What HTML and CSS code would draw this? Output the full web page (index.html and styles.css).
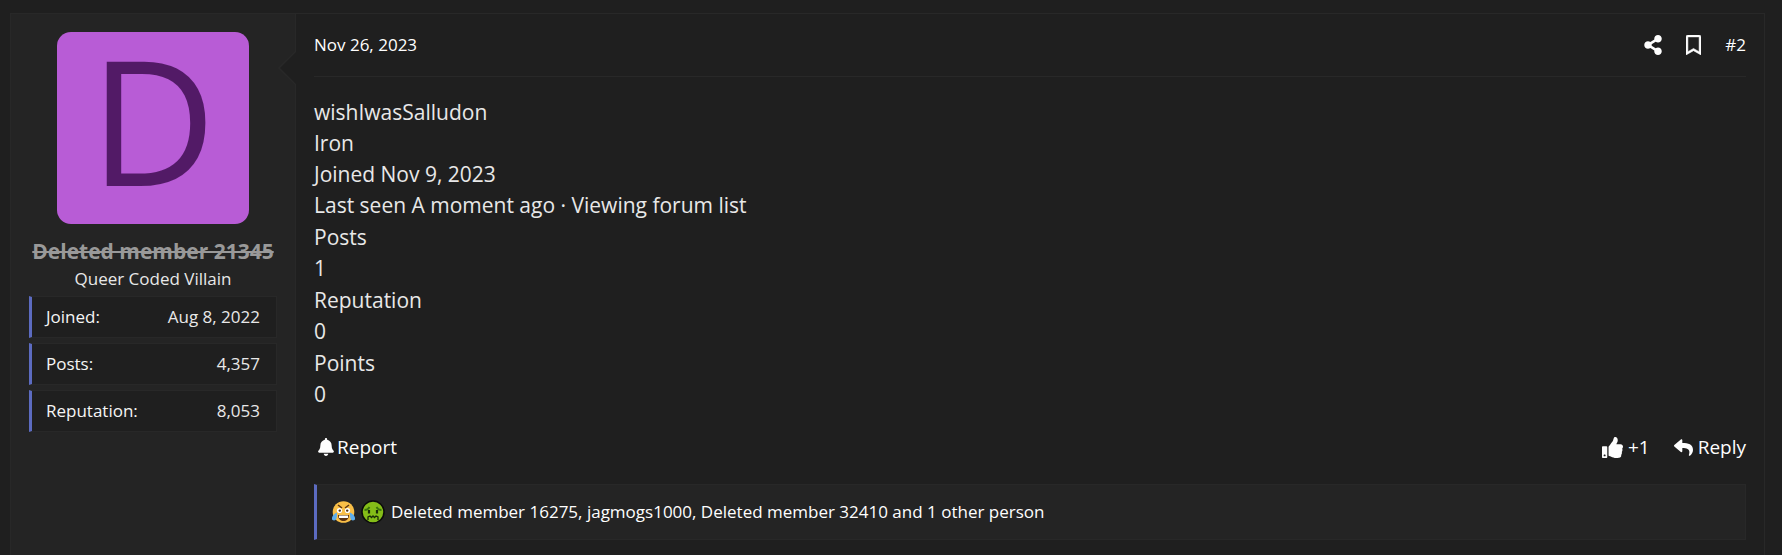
FILE: index.html
```html
<!DOCTYPE html>
<html lang="en">
<head>
    <meta charset="UTF-8">
    <meta name="viewport" content="width=device-width, initial-scale=1.0">
    <title>Forum Thread</title>
    <link rel="stylesheet" href="styles.css">
</head>
<body>
    <article class="post">
        <aside class="user">
            <div class="avatar">D</div>
            <h4 class="username">Deleted member 21345</h4>
            <div class="user-title">Queer Coded Villain</div>
            <dl class="stats">
                <div class="stat"><dt>Joined:</dt><dd>Aug 8, 2022</dd></div>
                <div class="stat"><dt>Posts:</dt><dd>4,357</dd></div>
                <div class="stat"><dt>Reputation:</dt><dd>8,053</dd></div>
            </dl>
            <svg class="arrow" width="18" height="34" viewBox="0 0 18 34">
                <path d="M18 0L1 17L18 34" fill="#1f1f1f" stroke="#282828" stroke-width="1.5"/>
            </svg>
        </aside>
        <div class="main">
            <header class="post-header">
                <a href="#">Nov 26, 2023</a>
                <div class="header-links">
                    <a href="#" aria-label="Share">
                        <svg width="18" height="20" viewBox="0 0 448 512" fill="currentColor"><path d="M352 320c-22.6 0-43.4 7.8-59.8 20.9l-102.5-64.1a96.6 96.6 0 0 0 0-41.7l102.500-64.100C308.600 184.200 329.400 192 352 192c53 0 96-43 96-96S405 0 352 0s-96 43-96 96c0 7.200.8 14.100 2.300 20.800L155.800 180.900C139.400 167.800 118.600 160 96 160c-53 0-96 43-96 96s43 96 96 96c22.600 0 43.400-7.800 59.800-20.900l102.500 64.100A96.300 96.300 0 0 0 256 416c0 53 43 96 96 96s96-43 96-96-43-96-96-96z"/></svg>
                    </a>
                    <a href="#" aria-label="Bookmark">
                        <svg width="15" height="20" viewBox="0 0 384 512" fill="currentColor"><path d="M336 0H48C21.500 0 0 21.500 0 48v464l192-112 192 112V48c0-26.500-21.500-48-48-48zm0 428.400l-144-84-144 84V54a6 6 0 0 1 6-6h276c3.300 0 6 2.700 6 6v374.400z" stroke="currentColor" stroke-width="14"/></svg>
                    </a>
                    <a href="#">#2</a>
                </div>
            </header>
            <div class="content">
                <div>
                    <div>wishIwasSalludon</div>
                    <div>Iron</div>
                    <div>Joined Nov 9, 2023</div>
                    <div>Last seen A moment ago · Viewing forum list</div>
                </div>
                <div>Posts<br>1</div>
                <div>Reputation<br>0</div>
                <div>Points<br>0</div>
            </div>
            <footer class="actions">
                <a href="#" class="report">
                    <svg width="16" height="18" viewBox="0 0 448 512" fill="currentColor"><path d="M224 512c35.300 0 63.900-28.700 63.900-64H160.100c0 35.300 28.600 64 63.900 64zm215.400-149.700c-19.300-20.800-55.500-52-55.500-154.300 0-77.700-54.500-139.900-127.900-155.200V32c0-17.700-14.300-32-32-32s-32 14.300-32 32v20.800C118.600 68.100 64.100 130.300 64.100 208c0 102.300-36.200 133.500-55.500 154.300-6 6.400-8.700 14.100-8.600 21.700.1 16.400 13 32 32.100 32h383.800c19.100 0 32-15.600 32.100-32 .1-7.600-2.600-15.300-8.600-21.700z"/></svg>Report
                </a>
                <div class="action-links">
                    <a href="#">
                        <svg width="21" height="21" viewBox="0 0 512 512" fill="currentColor"><path d="M104 224H24c-13.300 0-24 10.700-24 24v240c0 13.300 10.700 24 24 24h80c13.300 0 24-10.700 24-24V248c0-13.300-10.700-24-24-24zM64 472c-13.300 0-24-10.700-24-24s10.700-24 24-24 24 10.700 24 24-10.700 24-24 24zM384 81.500c0 42.400-26 66.200-33.300 94.500h101.700c33.400 0 59.400 27.700 59.600 58.100.1 17.900-7.500 37.200-19.400 49.200l-.1.100c9.800 23.300 8.200 56-9.300 79.500 8.700 25.900-.1 57.700-16.400 74.800 4.300 17.600 2.200 32.600-6.100 44.600C440.200 511.600 389.600 512 346.800 512H344c-48.300 0-87.800-17.600-119.600-31.700-16-7.100-36.800-15.900-52.700-16.200-6.500-.1-11.800-5.500-11.800-12V238.300c0-3.200 1.300-6.300 3.600-8.500 39.600-39.100 56.600-80.600 89.100-113.100 14.800-14.800 20.200-37.200 25.400-58.900C282.500 39.300 291.800 0 312 0c24 0 72 8 72 81.500z"/></svg>
                        +1
                    </a>
                    <a href="#">
                        <svg width="19" height="19" viewBox="0 0 512 512" fill="currentColor"><path d="M8.300 189.800l176-152c15.400-13.300 39.700-2.500 39.700 18.200v80c160.600 1.900 288 34.100 288 186.300 0 61.400-39.600 122.300-83.300 154.100-13.700 9.900-33.100-2.500-28.100-18.600 45.300-145-21.500-183.500-176.600-185.700V360c0 20.700-24.300 31.500-39.700 18.200l-176-152c-11.100-9.600-11.100-26.800 0-36.400z"/></svg>
                        Reply
                    </a>
                </div>
            </footer>
            <div class="reactions">
                <!-- laughing with tears, angry brows -->
                <svg width="23" height="24" viewBox="0 0 23 24">
                    <circle cx="11.5" cy="12" r="10.8" fill="#f9bf47"/>
                    <path d="M6 5l4 3M17 5l-4 3" stroke="#5c3411" stroke-width="1.5"/>
                    <circle cx="7.5" cy="10.5" r="2.6" fill="#fff"/>
                    <circle cx="15.5" cy="10.5" r="2.6" fill="#fff"/>
                    <circle cx="7.8" cy="10.6" r="1.2" fill="#523312"/>
                    <circle cx="15.2" cy="10.6" r="1.2" fill="#523312"/>
                    <path d="M6 15h11c0 8-11 8-11 0z" fill="#5c3411"/>
                    <path d="M7 15.5h9V18H7z" fill="#fff"/>
                    <path d="M5 12.5c0 4 0 8-3 8-4 0-2-6 3-8zM18 12.5c0 4 0 8 3 8 4 0 2-6-3-8z" fill="#5dadec"/>
                </svg>
                <!-- sick green face -->
                <svg width="24" height="24" viewBox="0 0 24 24">
                    <circle cx="12" cy="12" r="11" fill="#84bd18" stroke="#0b0b0b" stroke-width="1.5"/>
                    <path d="M3.500 10c2 0 4-1 5-3M20.500 10c-2 0-4-1-5-3" stroke="#3a740c" stroke-width="1.8" fill="none"/>
                    <path d="M8 10v3.500M16 10v3.500" stroke="#192a08" stroke-width="2.2"/>
                    <path d="M7 20v-3l2-1 1.500 1.500L12 16l1.500 1.500L15 16l2 1v3" stroke="#192a08" stroke-width="1.3" fill="none"/>
                </svg>
                <a href="#">Deleted member 16275, jagmogs1000, Deleted member 32410 and 1 other person</a>
            </div>
        </div>
    </article>
</body>
</html>
```
FILE: styles.css
```css
* {
    box-sizing: border-box;
}

body {
    margin: 0;
    padding: 13px 17px 0 10px;
    min-height: 100vh;
    display: flex;
    background-color: #1f1f1f;
    color: #e8e8e8;
    font-family: "Open Sans", "Noto Sans", sans-serif;
    font-size: 17px;
    line-height: 26px;
}

a {
    color: #fefefe;
    text-decoration: none;
}

svg {
    flex-shrink: 0;
}

.post {
    flex: 1;
    display: flex;
    border: 1px solid #282828;
    border-bottom: none;
}

.user {
    position: relative;
    width: 285px;
    flex-shrink: 0;
    padding: 18px;
    background-color: #242424;
    border-right: 1px solid #282828;
}

.avatar {
    width: 192px;
    height: 192px;
    margin: 0 auto 12px;
    border-radius: 14px;
    background-color: #b85cd6;
    color: #521a66;
    font-size: 174px;
    line-height: 174px;
    text-align: center;
}

.username {
    margin: 0;
    color: #999;
    font-size: 21px;
    line-height: 30px;
    text-align: center;
    text-decoration: line-through;
    white-space: nowrap;
}

.user-title {
    text-align: center;
}

.stats {
    margin: 4px 0 0;
    display: flex;
    flex-direction: column;
    gap: 5px;
}

.stat {
    display: flex;
    justify-content: space-between;
    padding: 7px 16px 7px 14px;
    background-color: #1f1f1f;
    border: 1px solid #282828;
    border-left: 3px solid #5c6bc0;
}

.stat dt {
    color: #f5f5f5;
}

.stat dd {
    margin: 0;
}

.arrow {
    position: absolute;
    top: 37px;
    right: -1px;
}

.main {
    flex: 1;
    padding: 18px 18px 14px;
}

.post-header {
    display: flex;
    justify-content: space-between;
    align-items: center;
    padding-bottom: 18px;
    border-bottom: 1px solid #282828;
}

.header-links {
    display: flex;
    align-items: center;
    gap: 24px;
}

.header-links a {
    display: flex;
}

.content {
    display: flex;
    flex-direction: column;
    gap: 1px;
    margin: 20px 0 22px;
    font-size: 21px;
    line-height: 31px;
}

.actions {
    display: flex;
    justify-content: space-between;
    align-items: center;
    margin-bottom: 22px;
    font-size: 19px;
    line-height: 30px;
}

.action-links {
    display: flex;
    gap: 24px;
}

.actions a {
    display: flex;
    align-items: center;
    gap: 5px;
}

.actions .report {
    gap: 3px;
    padding-left: 4px;
}

.reactions {
    display: flex;
    align-items: center;
    gap: 6px;
    padding: 14px 15px;
    background-color: #242424;
    border: 1px solid #282828;
    border-left: 3px solid #5c6bc0;
}
```
